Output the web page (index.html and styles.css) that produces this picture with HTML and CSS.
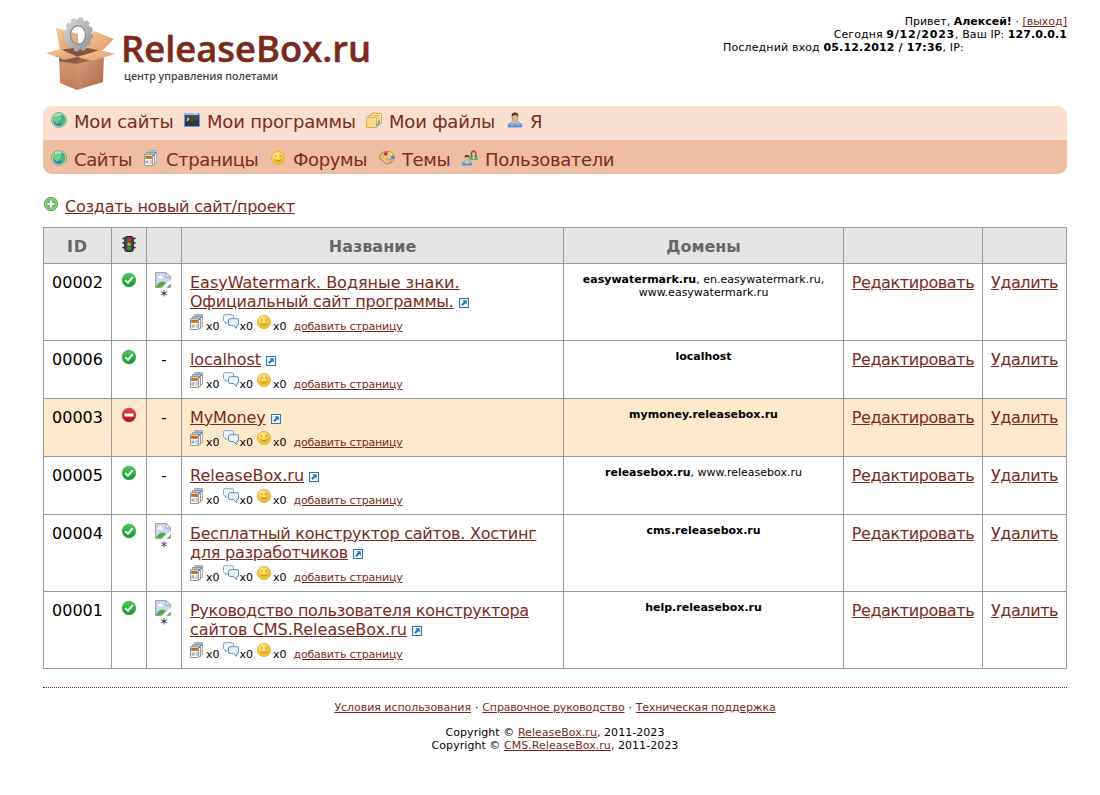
FILE: index.html
```html
<!DOCTYPE html>
<html lang="ru">
<head>
<meta charset="utf-8">
<title>ReleaseBox.ru</title>
<link rel="stylesheet" href="styles.css">
</head>
<body>
<svg class="defs" width="0" height="0" aria-hidden="true">
  <defs>
    <radialGradient id="gGlobe" cx="40%" cy="35%"><stop offset="0" stop-color="#b9def5"/><stop offset="1" stop-color="#2d7fbf"/></radialGradient>
    <linearGradient id="gOk" x2="0" y2="1"><stop offset="0" stop-color="#4fc95a"/><stop offset="1" stop-color="#12982a"/></linearGradient>
    <linearGradient id="gNo" x2="0" y2="1"><stop offset="0" stop-color="#e2494b"/><stop offset="1" stop-color="#b01218"/></linearGradient>
    <radialGradient id="gSmile" cx="40%" cy="30%"><stop offset="0" stop-color="#fff29a"/><stop offset="1" stop-color="#f3c030"/></radialGradient>
    <linearGradient id="gShirt" x2="0" y2="1"><stop offset="0" stop-color="#b5d8f7"/><stop offset="1" stop-color="#4d8fd0"/></linearGradient>
    <linearGradient id="gBoxL" x2="0" y2="1"><stop offset="0" stop-color="#8f5a40"/><stop offset=".3" stop-color="#d29470"/><stop offset="1" stop-color="#c27a56"/></linearGradient>
    <linearGradient id="gBoxR" x2="1" y2="1"><stop offset="0" stop-color="#dca17c"/><stop offset="1" stop-color="#a8694b"/></linearGradient>
    <linearGradient id="gFlap" x2="1" y2="1"><stop offset="0" stop-color="#fbc998"/><stop offset="1" stop-color="#dd9a6b"/></linearGradient>
    <linearGradient id="gGear" x2="1" y2="1"><stop offset="0" stop-color="#cfd0d2"/><stop offset="1" stop-color="#999b9e"/></linearGradient>
  </defs>
  <symbol id="globe" viewBox="0 0 16 16">
    <circle cx="8" cy="8" r="7.400" fill="#d3ecca" stroke="#67b267"/>
    <circle cx="8" cy="8" r="6.200" fill="url(#gGlobe)"/>
    <path d="M2.500 5C5 1.700 8 1.300 10.500 2.500L9.500 4 7.500 4.500 8.500 6 6.500 7.500 7.500 9 6.500 12 4.500 10 2 8Z" fill="#6fd072"/>
    <path d="M10.500 5L13.300 5.500 14 8 13 11.500 10.500 13.500 10 10.500 8.800 9Z" fill="#4cbb5a"/>
    <path d="M4 4Q7 1.700 10 3" stroke="#dcf6d8" fill="none"/>
  </symbol>
  <symbol id="term" viewBox="0 0 16 16">
    <path d="M0 1H16V15H0Z" fill="#5d9ae0"/><path d="M0 1H16V3H0Z" fill="#8cbcf2"/>
    <path d="M10 1.500H11V2.500H10ZM12 1.500H13V2.500H12Z" fill="#fff"/><path d="M14 1.500H15V2.500H14Z" fill="#e34b2e"/>
    <path d="M1 3.500H15V14H1Z" fill="#333"/><path d="M1 3.500H15V8L1 10Z" fill="#484848"/>
    <path d="M3 6L5 7.300 3 8.600" fill="none" stroke="#fff"/>
  </symbol>
  <symbol id="files" viewBox="0 0 16 16">
    <path d="M5.500 1.500L9 .700 10 1.500H15.500V11.500H5.500Z" fill="#fdedb0" stroke="#dda94a"/>
    <path d="M3 3.500L6.500 2.700 7.500 3.500H13V13.500H3Z" fill="#fbe6a0" stroke="#dda94a"/>
    <path d="M.500 5.500L4 4.700 5 5.500H10.500V15.500H.500Z" fill="#f9dc85" stroke="#dda94a"/>
    <path d="M13.500 8Q15.500 12 10.500 14.500V12.500L12.500 11.500 12 9Z" fill="#4aa8e0"/>
  </symbol>
  <symbol id="user" viewBox="0 0 16 16">
    <path d="M1 15Q.500 11.500 4 10.500L6 9.500H10L12 10.500Q15.500 11.500 15 15Z" fill="url(#gShirt)" stroke="#4b82bf" stroke-width=".7"/>
    <path d="M6 9L8 13 10 9Z" fill="#fff"/><path d="M7.500 10H8.500V13H7.500Z" fill="#8a5c4b"/>
    <ellipse cx="8" cy="5.500" rx="3" ry="4" fill="#e4b583" stroke="#94643c" stroke-width=".5"/>
    <path d="M4.800 5Q4 .500 8 .500T11.200 5Q10.500 3 8.500 3 5.500 3 4.800 5Z" fill="#4c3630"/>
  </symbol>
  <symbol id="pages" viewBox="0 0 16 16">
    <path d="M5.500 .500H13.500V12.500H5.500Z" fill="#f7f7f7" stroke="#aaa"/><path d="M6.500 2H12.500V4" fill="none" stroke="#3f84b7"/>
    <path d="M3.500 2.500H11.500V14.500H3.500Z" fill="#fafafa" stroke="#999"/><path d="M4.500 4H10.500V6" fill="none" stroke="#3f84b7"/>
    <path d="M1.500 4.500H9.500V15.500H1.500Z" fill="#fff" stroke="#999"/>
    <path d="M2.500 6H8.500V8.500H2.500Z" fill="#cf7218" stroke="#9d4d0b" stroke-width=".5"/>
    <path d="M2.500 10.500H5.500V13.500H2.500Z" fill="#aaa"/><path d="M6.500 11H9M6.500 13H9" stroke="#999"/>
  </symbol>
  <symbol id="smile" viewBox="0 0 16 16">
    <circle cx="8" cy="8" r="6.600" fill="url(#gSmile)" stroke="#e6b03a" stroke-width=".9"/>
    <path d="M5.800 5V7M10.200 5V7M4.500 9.300Q8 12.500 11.500 9.300" fill="none" stroke="#a87a25" stroke-width=".9"/>
  </symbol>
  <symbol id="palette" viewBox="0 0 16 16">
    <path d="M8 1.500C2 1.500 0 5 .700 8.500 1.500 11 4 9 4.500 11 5 13.500 7.500 14 10 13.500 14 12.500 16 9 15.300 6 14.500 3 11.500 1.500 8 1.500Z" fill="#edc58c" stroke="#a56f32" stroke-width=".8"/>
    <circle cx="3" cy="6" r="1.500" fill="#f5e1b8" stroke="#a56f32" stroke-width=".5"/>
    <circle cx="6.800" cy="3.800" r="1.900" fill="#d62638"/><circle cx="11.500" cy="4" r="1.800" fill="#eee33d"/>
    <circle cx="13.500" cy="7.500" r="1.800" fill="#3c88df"/><circle cx="11" cy="10.800" r="1.500" fill="#e3c593" stroke="#a56f32" stroke-width=".5"/>
    <circle cx="8" cy="9" r="1" fill="#fff" stroke="#a56f32" stroke-width=".6"/>
  </symbol>
  <symbol id="users" viewBox="0 0 16 16">
    <path d="M7.500 9.500Q8 6.500 10.500 6.500H13Q16 7 15.700 9.500Z" fill="#62b384" stroke="#3c8e5c" stroke-width=".5"/>
    <path d="M8.800 7Q8 .300 11.500 .300T14.700 7Z" fill="#8c4b2e"/><ellipse cx="11.700" cy="4.300" rx="1.600" ry="2.200" fill="#ecc19a"/><path d="M10.500 6.500L11.700 9 13 6.500Z" fill="#fff"/>
    <path d="M.300 15Q0 11.500 3 11H7Q10.200 11.500 10 15Z" fill="url(#gShirt)" stroke="#3c77bd" stroke-width=".6"/>
    <path d="M4 11L5 14 6 11Z" fill="#fff"/><ellipse cx="5" cy="8.500" rx="2.200" ry="2.900" fill="#e4b583"/>
    <path d="M2.700 8Q2.200 5 5 5T7.300 8Q6.500 6.700 5 6.700T2.700 8Z" fill="#3b302e"/>
  </symbol>
  <symbol id="plus" viewBox="0 0 16 16">
    <circle cx="8" cy="8" r="6.700" fill="#6dbd6d" stroke="#459447" stroke-width=".8"/><circle cx="8" cy="8" r="5.600" fill="none" stroke="#a9dca9" stroke-width=".8"/>
    <path d="M8 4.500V11.500M4.500 8H11.500" stroke="#fff" stroke-width="2.200"/>
  </symbol>
  <symbol id="light" viewBox="0 0 16 16">
    <path d="M1.300 2.500H5M1.300 7H5M1.300 11.500H5M11 2.500H14.700M11 7H14.700M11 11.500H14.700" stroke="#333" stroke-width="1.600"/>
    <rect x="3.700" y=".500" width="8.600" height="15" rx="2" fill="#4a4a4a" stroke="#222"/>
    <circle cx="8" cy="4" r="1.800" fill="#e52b25"/><circle cx="8" cy="8.200" r="1.700" fill="#d5ad16"/><circle cx="8" cy="12.200" r="1.700" fill="#22a52a"/>
  </symbol>
  <symbol id="ok" viewBox="0 0 16 16">
    <circle cx="8" cy="8" r="6.900" fill="url(#gOk)" stroke="#2aa63a" stroke-width=".4"/>
    <path d="M4.300 8.200L7 10.700 11.700 5.200" fill="none" stroke="#fff" stroke-width="2"/>
  </symbol>
  <symbol id="no" viewBox="0 0 16 16">
    <circle cx="8" cy="8" r="6.900" fill="url(#gNo)" stroke="#a52427" stroke-width=".4"/><path d="M3.500 6.500H12.500V9.500H3.500Z" fill="#fff"/>
  </symbol>
  <symbol id="chat" viewBox="0 0 16 16">
    <path d="M2 .700H9Q10.500 .700 10.500 2.200V6.500Q10.500 8 9 8H4.500L2.500 10V8Q.500 8 .500 6.500V2.200Q.500 .700 2 .700Z" fill="#f2f8fd" stroke="#80a9d3"/>
    <path d="M7.500 4.700H14Q15.500 4.700 15.500 6.200V10Q15.500 11.500 14 11.500L13.500 14.500 10.500 11.500H7.500Q5.500 11.500 5.500 10V6.200Q5.500 4.700 7.500 4.700Z" fill="#eaf4fd" stroke="#5689c0"/>
  </symbol>
  <symbol id="ext" viewBox="0 0 9 9">
    <path d="M.500 .500H8.500V8.500H.500Z" fill="#fff" stroke="#2779b5"/><path d="M3 2H7V6L5.700 4.800 3.300 7.200 1.900 5.800 4.300 3.400Z" fill="#2779b5"/>
  </symbol>
  <symbol id="broken" viewBox="0 0 16 16">
    <path d="M.500 .500H11L15.500 5V15.500H.500Z" fill="#c5d9f5" stroke="#a4a4a4"/>
    <path d="M11 .500V5H15.500Z" fill="#fff" stroke="#a4a4a4"/>
    <path d="M2.500 6Q2.500 4 4.500 4 6 2.500 7 4.500 8.500 5 8 6.500H2.500Z" fill="#fff"/>
    <path d="M1 15Q3 10 7.500 9.500 10 9.500 11 11L7 15Z" fill="#56a944"/><path d="M6.500 16L16 7.500V11L11.500 16Z" fill="#fff"/>
    <path d="M12.500 15L15 12.500V15Z" fill="#56a944"/>
  </symbol>
</svg>

<div class="page">
  <header class="header">
    <svg class="logo" width="340" height="90" viewBox="0 0 340 90" role="img" aria-label="ReleaseBox.ru">
      <path d="M20 39L40 34 60 40 38 50Z" fill="#80543f"/>
      <path d="M16 18L38 24 38 37 20 40Z" fill="url(#gFlap)"/><path d="M74 29L54 21 42 37 62 41Z" fill="url(#gFlap)"/>
      <g fill="none" stroke="url(#gGear)">
        <ellipse cx="38.500" cy="24.500" rx="12.700" ry="15.200" stroke-width="4" pathLength="24" stroke-dasharray="1.150 .850"/>
        <ellipse cx="38.500" cy="24.500" rx="10.300" ry="12.300" stroke-width="6"/>
        <ellipse cx="38" cy="25" rx="7.500" ry="9.300" stroke="#85888b" stroke-width="1.200"/>
      </g>
      <path d="M19 43L37 49V80L20 73Z" fill="url(#gBoxL)"/><path d="M37 49L64 44 63 72 37 80Z" fill="url(#gBoxR)"/>
      <path d="M19 45L37 48 62 45V47L37 54 19 51Z" fill="#4b2c20" opacity=".45"/>
      <path d="M6 43L20 39 38 47 24 50Z" fill="url(#gFlap)"/><path d="M37 47L60 40 75 44 52 51Z" fill="url(#gFlap)"/>
      <text class="logo-name" x="81" y="52" textLength="250" lengthAdjust="spacingAndGlyphs">ReleaseBox.ru</text>
      <text class="logo-sub" x="84" y="70" textLength="154" lengthAdjust="spacingAndGlyphs">центр управления полетами</text>
    </svg>
    <div class="account">
      <div class="hello">Привет, <b>Алексей!</b> · <a href="#">[выход]</a></div>
      <div class="today">Сегодня <b class="date">9/12/2023</b>, Ваш IP: <b>127.0.0.1</b></div>
      <div class="last">Последний вход <b>05.12.2012 / 17:36</b>, IP:</div>
    </div>
  </header>

  <nav class="menu">
    <div class="menu-row">
      <a class="w1"><svg class="i"><use href="#globe"/></svg>Мои сайты</a>
      <a class="w2"><svg class="i"><use href="#term"/></svg>Мои программы</a>
      <a class="w3"><svg class="i"><use href="#files"/></svg>Мои файлы</a>
      <a><svg class="i"><use href="#user"/></svg>Я</a>
    </div>
    <div class="menu-row menu-sub">
      <a class="w4"><svg class="i"><use href="#globe"/></svg>Сайты</a>
      <a class="w5"><svg class="i"><use href="#pages"/></svg>Страницы</a>
      <a class="w6"><svg class="i"><use href="#smile"/></svg>Форумы</a>
      <a class="w7"><svg class="i"><use href="#palette"/></svg>Темы</a>
      <a><svg class="i"><use href="#users"/></svg>Пользователи</a>
    </div>
  </nav>

  <div class="create"><svg class="i"><use href="#plus"/></svg><a href="#">Создать новый сайт/проект</a></div>

  <table class="sites">
    <colgroup><col class="c-id"><col class="c-st"><col class="c-st"><col class="c-name"><col class="c-dom"><col class="c-edit"><col></colgroup>
    <thead><tr><th class="id-head">ID</th><th><svg class="i"><use href="#light"/></svg></th><th></th><th>Название</th><th>Домены</th><th></th><th></th></tr></thead>
    <tbody>
      <tr class="tall"><td>00002</td><td><svg class="i"><use href="#ok"/></svg></td><td class="pic"><svg class="i"><use href="#broken"/></svg><span class="star">*</span></td>
        <td class="name"><a href="#">EasyWatermark. Водяные знаки.<br><span class="t2">Официальный сайт программы.</span></a><svg class="ext"><use href="#ext"/></svg>
          <div class="stats"><span><svg class="i"><use href="#pages"/></svg>x0</span><span><svg class="i"><use href="#chat"/></svg>x0</span><span><svg class="i"><use href="#smile"/></svg>x0</span><a href="#">добавить страницу</a></div></td>
        <td class="dom"><b>easywatermark.ru</b>, en.easywatermark.ru,<br>www.easywatermark.ru</td><td class="act"><a href="#">Редактировать</a></td><td class="act"><a href="#">Удалить</a></td></tr>
      <tr><td>00006</td><td><svg class="i"><use href="#ok"/></svg></td><td>-</td>
        <td class="name"><a href="#" class="t1">localhost</a><svg class="ext"><use href="#ext"/></svg>
          <div class="stats"><span><svg class="i"><use href="#pages"/></svg>x0</span><span><svg class="i"><use href="#chat"/></svg>x0</span><span><svg class="i"><use href="#smile"/></svg>x0</span><a href="#">добавить страницу</a></div></td>
        <td class="dom"><b>localhost</b></td><td class="act"><a href="#">Редактировать</a></td><td class="act"><a href="#">Удалить</a></td></tr>
      <tr class="off"><td>00003</td><td><svg class="i"><use href="#no"/></svg></td><td>-</td>
        <td class="name"><a href="#" class="t1">MyMoney</a><svg class="ext"><use href="#ext"/></svg>
          <div class="stats"><span><svg class="i"><use href="#pages"/></svg>x0</span><span><svg class="i"><use href="#chat"/></svg>x0</span><span><svg class="i"><use href="#smile"/></svg>x0</span><a href="#">добавить страницу</a></div></td>
        <td class="dom"><b>mymoney.releasebox.ru</b></td><td class="act"><a href="#">Редактировать</a></td><td class="act"><a href="#">Удалить</a></td></tr>
      <tr><td>00005</td><td><svg class="i"><use href="#ok"/></svg></td><td>-</td>
        <td class="name"><a href="#">ReleaseBox.ru</a><svg class="ext"><use href="#ext"/></svg>
          <div class="stats"><span><svg class="i"><use href="#pages"/></svg>x0</span><span><svg class="i"><use href="#chat"/></svg>x0</span><span><svg class="i"><use href="#smile"/></svg>x0</span><a href="#">добавить страницу</a></div></td>
        <td class="dom"><b>releasebox.ru</b>, www.releasebox.ru</td><td class="act"><a href="#">Редактировать</a></td><td class="act"><a href="#">Удалить</a></td></tr>
      <tr class="tall"><td>00004</td><td><svg class="i"><use href="#ok"/></svg></td><td class="pic"><svg class="i"><use href="#broken"/></svg><span class="star link">*</span></td>
        <td class="name"><a href="#" class="t2">Бесплатный конструктор сайтов. Хостинг<br>для разработчиков</a><svg class="ext"><use href="#ext"/></svg>
          <div class="stats"><span><svg class="i"><use href="#pages"/></svg>x0</span><span><svg class="i"><use href="#chat"/></svg>x0</span><span><svg class="i"><use href="#smile"/></svg>x0</span><a href="#">добавить страницу</a></div></td>
        <td class="dom"><b>cms.releasebox.ru</b></td><td class="act"><a href="#">Редактировать</a></td><td class="act"><a href="#">Удалить</a></td></tr>
      <tr class="tall"><td>00001</td><td><svg class="i"><use href="#ok"/></svg></td><td class="pic"><svg class="i"><use href="#broken"/></svg><span class="star">*</span></td>
        <td class="name"><a href="#"><span class="t3">Руководство пользователя конструктора</span><br>сайтов CMS.ReleaseBox.ru</a><svg class="ext"><use href="#ext"/></svg>
          <div class="stats"><span><svg class="i"><use href="#pages"/></svg>x0</span><span><svg class="i"><use href="#chat"/></svg>x0</span><span><svg class="i"><use href="#smile"/></svg>x0</span><a href="#">добавить страницу</a></div></td>
        <td class="dom"><b>help.releasebox.ru</b></td><td class="act"><a href="#">Редактировать</a></td><td class="act"><a href="#">Удалить</a></td></tr>
    </tbody>
  </table>

  <footer class="footer">
    <div class="links"><a class="f1" href="#">Условия использования</a><span>·</span><a href="#">Справочное руководство</a><span>·</span><a href="#">Техническая поддержка</a></div>
    <div class="copy">Copyright © <a href="#">ReleaseBox.ru</a>, 2011-2023<br>Copyright © <a href="#">CMS.ReleaseBox.ru</a>, 2011-2023</div>
  </footer>
</div>
</body>
</html>
```
FILE: styles.css
```css
body { margin: 0; background: #fff; color: #000; font: 16px/19px Verdana, "DejaVu Sans", sans-serif; white-space: nowrap; }
a { color: #7b2b1d; }
.defs { position: absolute; }
.page { width: 1024px; margin: 0 auto 0 43px; }
.i { width: 16px; height: 16px; display: block; flex: none; }

.header { display: flex; justify-content: space-between; height: 96px; padding-top: 10px; }
.logo { margin-left: -3px; display: block; }
.logo-name { font: 600 36px "Open Sans", sans-serif; fill: #7b2b1d; stroke: #7b2b1d; stroke-width: .5; }
.logo-sub { font: 600 11px "Open Sans", sans-serif; fill: #444; }
.account { width: 344px; padding-top: 5px; font-size: 11px; line-height: 13px; }
.hello, .today { text-align: right; }
.today { letter-spacing: .08px; }
.date { letter-spacing: .8px; }
.last { letter-spacing: .15px; }

.menu { border-radius: 9px; overflow: hidden; }
.menu-row { display: flex; height: 34px; padding-left: 8px; background: #f9dfd2; font-size: 18px; line-height: 32px; letter-spacing: -.2px; }
.menu-sub { background: #efbda1; height: 34px; line-height: 39px; letter-spacing: -.38px; }
.menu-row a { display: flex; }
.menu-row .i { margin: 6px 7px 0 0; }
.menu-sub .i { margin-top: 10px; }
.w1 { width: 133px; }
.w2 { width: 182px; }
.w3 { width: 141px; }
.w4 { width: 92px; }
.w5 { width: 127px; }
.w6 { width: 109px; }
.w7 { width: 83px; }

.create { display: flex; gap: 6px; margin-top: 22px; height: 31px; line-height: 22px; letter-spacing: -.2px; }

.sites { width: 1024px; table-layout: fixed; border-collapse: collapse; }
.sites th, .sites td { border: 1px solid #999; padding: 9px 0 0; text-align: center; vertical-align: top; box-sizing: border-box; }
.sites th { height: 36px; background: #e5e5e5; color: #666; }
.sites .id-head { letter-spacing: .8px; }
.sites td { height: 58px; }
.sites .tall td { height: 77px; }
.sites .off td { background: #fee9cd; }
.sites td > .i, .sites th > .i { margin: -1px auto 0; }
.sites td.pic > .i { margin-left: 8px; }
.c-id { width: 68px; }
.c-st { width: 35px; }
.c-name { width: 382px; }
.c-dom { width: 280px; }
.c-edit { width: 139px; }
.sites td.name { padding-left: 8px; text-align: left; }
.t1 { letter-spacing: -.1px; }
.t2 { letter-spacing: -.24px; }
.t3 { letter-spacing: -.28px; }
.act { letter-spacing: -.4px; }
.star { display: block; font-size: 14px; line-height: 15px; color: #223; }
.star.link { color: #1b5470; }
.ext { width: 10px; height: 10px; margin-left: 5px; vertical-align: -1px; }
.stats { display: flex; height: 22px; font-size: 11px; line-height: 32px; }
.stats span { display: flex; width: 33.500px; }
.stats a { margin-left: 3px; letter-spacing: -.2px; }
.stats .i { margin: 3px 1px 0 -1px; }
.sites td.dom { font-size: 11px; line-height: 13px; }

.footer { margin-top: 18px; padding-top: 13px; border-top: 1px dotted #7b2b1d; text-align: center; font-size: 11px; line-height: 13px; }
.links { letter-spacing: -.17px; }
.f1 { letter-spacing: -.05px; }
.links span { margin: 0 4px; }
.copy { margin-top: 12px; letter-spacing: .05px; }
```
